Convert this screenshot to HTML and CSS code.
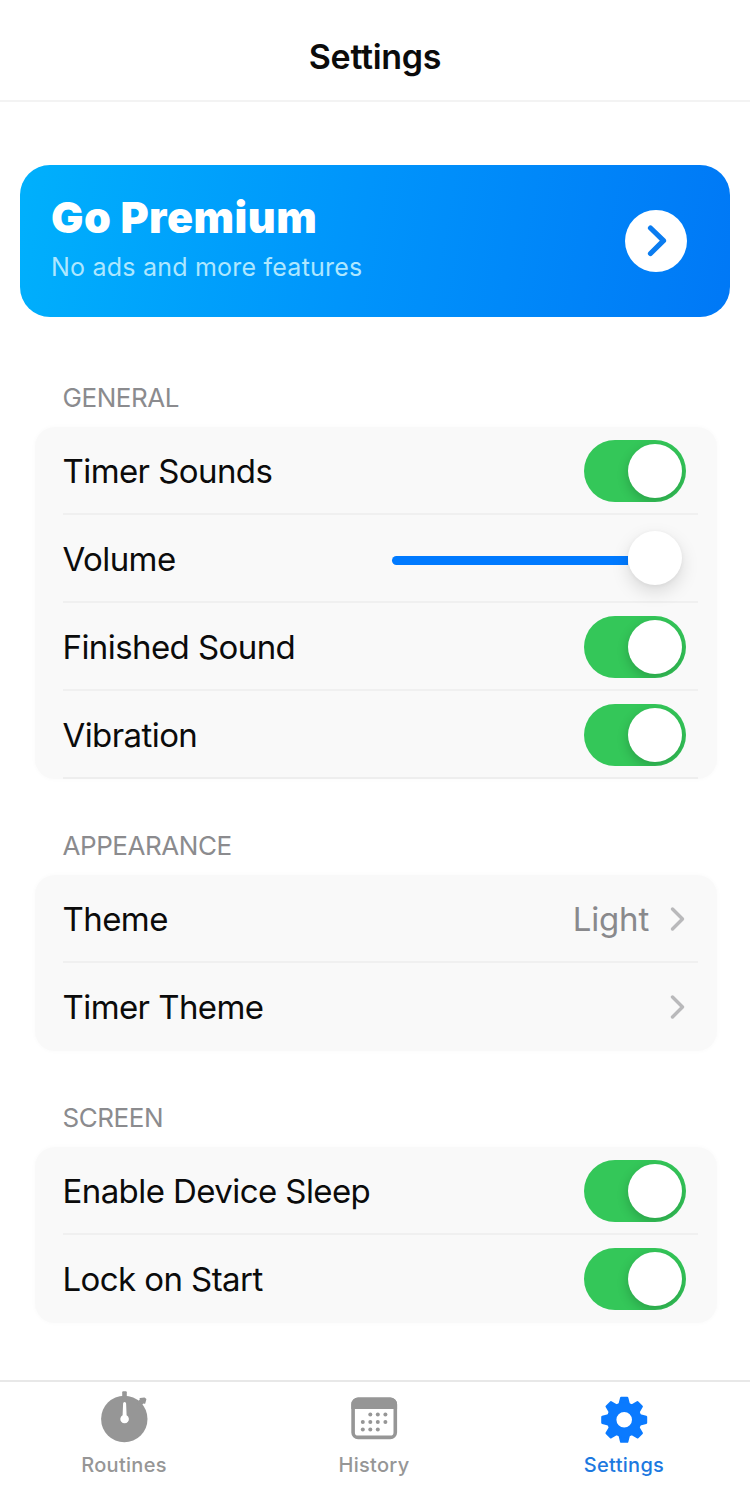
FILE: index.html
```html
<!DOCTYPE html>
<html lang="en">
<head>
<meta charset="utf-8">
<title>Settings</title>
<link rel="stylesheet" href="styles.css">
</head>
<body>
<div class="app">
  <header class="header"><h1 class="title">Settings</h1></header>
  <main class="content">
    <section class="premium">
      <div class="premium-text">
        <h2 class="premium-title">Go Premium</h2>
        <p class="premium-sub">No ads and more features</p>
      </div>
      <div class="premium-go">
        <svg width="62" height="62" viewBox="0 0 62 62"><path d="M25.500 18 38.500 30.700 25.500 43.500" fill="none" stroke="#0a7cf0" stroke-width="5.200" stroke-linecap="round" stroke-linejoin="round"/></svg>
      </div>
    </section>

    <h3 class="label">GENERAL</h3>
    <section class="card trailing-line">
      <div class="row"><span class="name">Timer Sounds</span><span class="switch"><i class="knob"></i></span></div>
      <div class="row"><span class="name">Volume</span><span class="slider"><i class="track"></i><i class="thumb"></i></span></div>
      <div class="row"><span class="name">Finished Sound</span><span class="switch"><i class="knob"></i></span></div>
      <div class="row"><span class="name">Vibration</span><span class="switch"><i class="knob"></i></span></div>
    </section>

    <h3 class="label">APPEARANCE</h3>
    <section class="card">
      <div class="row"><span class="name">Theme</span><span class="value"><span>Light</span><svg class="chevron" width="18" height="28" viewBox="0 0 18 28"><path d="M4.500 4 14.500 14 4.500 24" fill="none" stroke="#b9b9bb" stroke-width="3.400" stroke-linecap="round" stroke-linejoin="round"/></svg></span></div>
      <div class="row"><span class="name">Timer Theme</span><span class="value"><svg class="chevron" width="18" height="28" viewBox="0 0 18 28"><path d="M4.500 4 14.500 14 4.500 24" fill="none" stroke="#b9b9bb" stroke-width="3.400" stroke-linecap="round" stroke-linejoin="round"/></svg></span></div>
    </section>

    <h3 class="label">SCREEN</h3>
    <section class="card">
      <div class="row"><span class="name">Enable Device Sleep</span><span class="switch"><i class="knob"></i></span></div>
      <div class="row"><span class="name">Lock on Start</span><span class="switch"><i class="knob"></i></span></div>
    </section>
  </main>
  <nav class="tabs">
    <a class="tab">
      <svg width="56" height="56" viewBox="0 0 56 56">
        <g fill="#969696"><circle cx="28.300" cy="30" r="23.200"/><rect x="26.200" y="2.200" width="4.600" height="8" rx="1"/><path d="M41 14 44.800 10.800 44.200 9.800 48.400 9.200 49.600 10.400 48.600 14 47.400 13.400 44 17Z" stroke="#969696" stroke-width="1.500" stroke-linejoin="round"/></g>
        <path d="M27.100 14.500a1.500 1.500 0 0 1 3 0L30.600 26.200a4.300 4.300 0 1 1-4 0Z" fill="#fff"/>
      </svg>
      <span class="tab-name">Routines</span>
    </a>
    <a class="tab">
      <svg width="56" height="56" viewBox="0 0 56 56">
        <rect x="7.100" y="10.400" width="42.200" height="38" rx="5" fill="#fff" stroke="#969696" stroke-width="3.600"/>
        <path d="M5.300 20V15.500a7 7 0 0 1 7-7h31.800a7 7 0 0 1 7 7v4.500Z" fill="#969696"/>
        <g fill="#969696"><circle cx="24.300" cy="25.600" r="2"/><circle cx="31.800" cy="25.600" r="2"/><circle cx="39.400" cy="25.600" r="2"/><circle cx="16.800" cy="33" r="2"/><circle cx="24.300" cy="33" r="2"/><circle cx="31.800" cy="33" r="2"/><circle cx="39.400" cy="33" r="2"/><circle cx="16.800" cy="40.400" r="2"/><circle cx="24.300" cy="40.400" r="2"/><circle cx="31.800" cy="40.400" r="2"/></g>
      </svg>
      <span class="tab-name">History</span>
    </a>
    <a class="tab active">
      <svg width="56" height="56" viewBox="0 0 56 56">
        <defs><path id="tooth" d="M-4.700-15-3-21.800H3L4.700-15Z"/></defs>
        <g transform="translate(28.200 30.800)" fill="#0a7aff" stroke="#0a7aff" stroke-width="2.400" stroke-linejoin="round">
          <use href="#tooth"/><use href="#tooth" transform="rotate(45)"/><use href="#tooth" transform="rotate(90)"/><use href="#tooth" transform="rotate(135)"/><use href="#tooth" transform="rotate(180)"/><use href="#tooth" transform="rotate(225)"/><use href="#tooth" transform="rotate(270)"/><use href="#tooth" transform="rotate(315)"/>
          <circle r="12.600" fill="none" stroke-width="9.600"/>
        </g>
      </svg>
      <span class="tab-name">Settings</span>
    </a>
  </nav>
</div>
</body>
</html>
```
FILE: styles.css
```css
* { box-sizing: border-box; }
body { margin: 0; background: #fff; font-family: Inter, "Liberation Sans", sans-serif; color: #0b0b0b; }
h1, h2, h3, p { margin: 0; }
.app { width: 750px; height: 1486px; display: flex; flex-direction: column; overflow: hidden; }
.header { height: 102px; flex: none; padding-top: 14px; border-bottom: 2px solid #f3f3f3; display: flex; align-items: center; justify-content: center; }
.title { font-size: 34px; line-height: 44px; font-weight: 600; letter-spacing: -0.3px; }
.content { flex: 1; padding-top: 63px; }
.premium { margin: 0 20px; height: 152px; border-radius: 30px; padding: 0 43px 0 31px; display: flex; align-items: center; justify-content: space-between; background: linear-gradient(100deg, #00b0fc 0%, #0094fb 48%, #0078f6 100%); }
.premium-text { padding-bottom: 9px; }
.premium-title { font-size: 43px; line-height: 52px; font-weight: 900; letter-spacing: 0.5px; color: #fff; }
.premium-sub { font-size: 25px; line-height: 32px; margin-top: 8px; letter-spacing: 0.22px; color: #aee7ff; }
.premium-go { width: 62px; height: 62px; border-radius: 50%; background: #fff; }
.premium-go svg { display: block; }
.label { height: 96px; padding: 51px 0 0 62.5px; font-size: 26px; line-height: 32px; font-weight: 400; letter-spacing: -0.45px; color: #8b8b8e; }
.premium + .label { height: 110px; padding-top: 65px; }
.card { margin: 0 33px 0 35px; border-radius: 20px; background: #f9f9f9; box-shadow: 0 0 5px #f9f9f9; padding: 0 19px 0 28px; }
.row { height: 88px; border-bottom: 2px solid #f0f0f0; padding: 2px 12px 0 0; display: flex; align-items: center; justify-content: space-between; }
.row:last-child { border-color: transparent; }
.trailing-line .row:last-child { border-color: #eeeeee; }
.name { font-size: 33px; line-height: 44px; letter-spacing: -0.58px; margin-left: -0.5px; white-space: nowrap; }
.switch { width: 102px; height: 62px; border-radius: 31px; background: #34c759; padding: 4px; display: flex; justify-content: flex-end; overflow: hidden; }
.knob { width: 54px; height: 54px; border-radius: 50%; background: #fff; box-shadow: 0 4px 12px rgba(0,0,0,.2); }
.slider { width: 294px; display: flex; align-items: center; padding: 2px 4px 0 0; }
.track { flex: 1; height: 9px; border-radius: 5px 0 0 5px; background: #007aff; }
.thumb { width: 54px; height: 54px; border-radius: 50%; background: #fff; margin-top: -4px; box-shadow: 0 7px 18px rgba(0,0,0,.13), 0 1px 4px rgba(0,0,0,.05); }
.value { display: flex; align-items: center; gap: 19px; font-size: 33px; line-height: 44px; letter-spacing: -0.2px; color: #89898c; }
.chevron { display: block; }
.tabs { height: 106px; flex: none; border-top: 2px solid #e8e8e8; display: grid; grid-template-columns: repeat(3, 250px); }
.tab { display: flex; flex-direction: column; align-items: center; padding-right: 2px; padding-top: 7px; color: #969696; }
.tab svg { display: block; }
.tab-name { font-size: 20px; line-height: 24px; font-weight: 500; margin-top: 8px; letter-spacing: 0.3px; }
.active { color: #1c79e0; }
```
